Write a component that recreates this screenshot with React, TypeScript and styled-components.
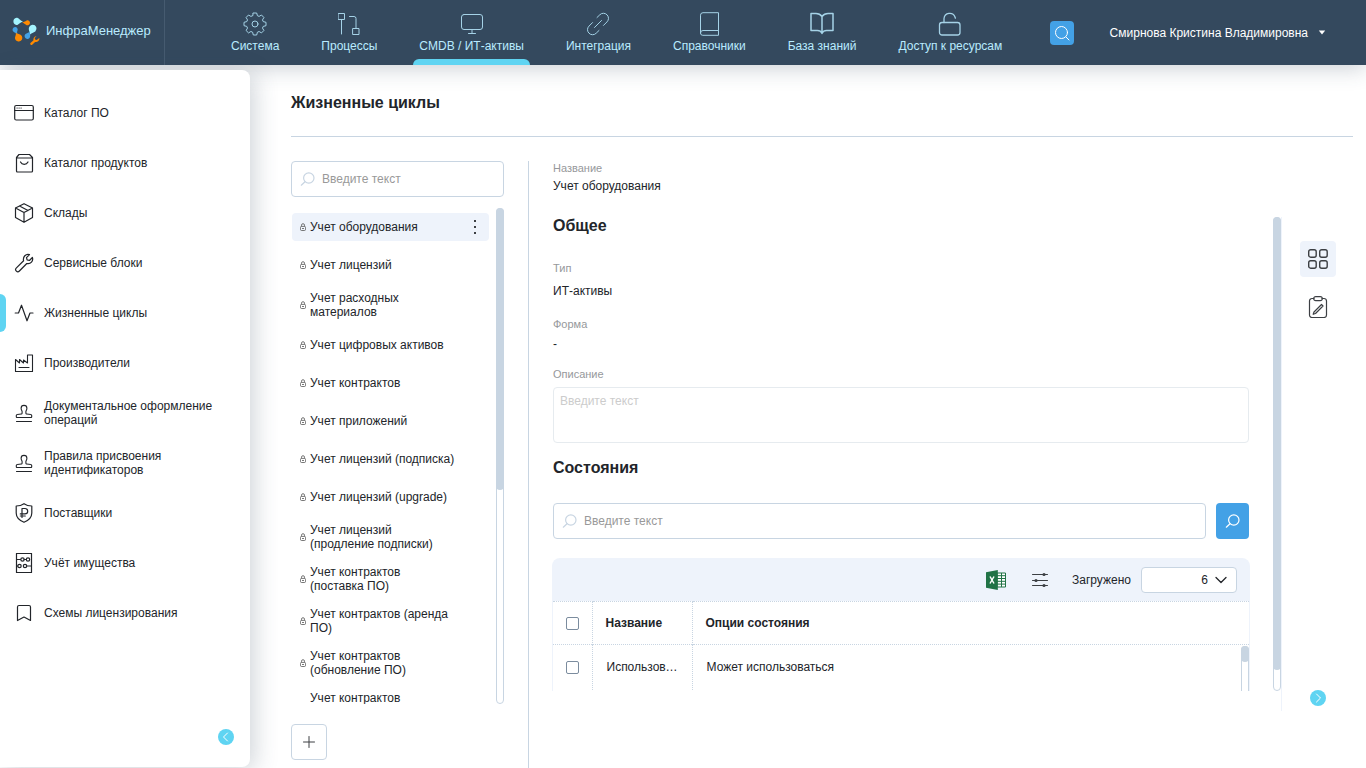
import React from "react";
import styled, { createGlobalStyle, css } from "styled-components";

const color = {
  header: "#34495e",
  headerText: "#b9ebff",
  accent: "#5fd4f2",
  blue: "#43a1e6",
  line: "#c8d5e2",
  soft: "#eef3fb",
  text: "#22252a",
  label: "#96989b",
};

const GlobalStyle = createGlobalStyle`
  *, *::before, *::after { box-sizing: border-box; }
  body {
    margin: 0;
    background: #fff;
    color: ${color.text};
    font: 12px/14px "Liberation Sans", Arial, sans-serif;
  }
  button, input, select, textarea { font: inherit; color: inherit; }
  button { cursor: pointer; }
  h1, h2, p, ul, dl, dd { margin: 0; padding: 0; }
  ul { list-style: none; }
  a { color: inherit; text-decoration: none; }
`;

const Page = styled.div`
  display: flex;
  flex-direction: column;
  height: 100vh;
  min-height: 640px;
  overflow: hidden;
`;

/* ---------- header ---------- */

const Header = styled.header`
  position: relative;
  z-index: 1;
  flex: none;
  display: flex;
  align-items: center;
  height: 65px;
  padding-right: 40px;
  background: ${color.header};
  box-shadow: 0 4px 20px rgba(52, 73, 94, 0.24);
`;

const Brand = styled.a`
  display: flex;
  align-items: center;
  gap: 6px;
  width: 165px;
  height: 100%;
  padding: 0 0 4px 12px;
  border-right: 1px solid #465b70;
  color: ${color.headerText};
  font-size: 13px;
`;

const Nav = styled.nav`
  flex: 1;
  display: flex;
  align-self: stretch;
  gap: 30px;
  padding-left: 60px;
`;

const NavItem = styled.a<{ $active?: boolean }>`
  display: flex;
  flex-direction: column;
  align-items: center;
  gap: 3px;
  padding: 12px 6px 0;
  color: ${color.headerText};
  white-space: nowrap;

  svg { opacity: 0.85; }

  &::after {
    content: "";
    align-self: stretch;
    height: 6px;
    margin: auto -6px 0;
    border-radius: 6px 6px 0 0;
    background: ${(p) => (p.$active ? color.accent : "transparent")};
  }
`;

const SearchButton = styled.button`
  display: grid;
  place-items: center;
  width: 24px;
  height: 24px;
  padding: 0;
  border: 0;
  border-radius: 4px;
  background: ${color.blue};
  color: #fff;
`;

const UserButton = styled.button`
  display: flex;
  align-items: center;
  gap: 10px;
  margin-left: 36px;
  padding: 0;
  border: 0;
  background: none;
  color: #fff;
  white-space: nowrap;
`;

/* ---------- side menu ---------- */

const Body = styled.div`
  flex: 1;
  min-height: 0;
  display: flex;
`;

const Sidebar = styled.aside`
  position: relative;
  z-index: 2;
  flex: none;
  display: flex;
  flex-direction: column;
  justify-content: space-between;
  width: 250px;
  margin: 5px 0 1px;
  padding: 18px 0 22px;
  border-radius: 0 8px 8px 0;
  background: #fff;
  box-shadow: 4px 4px 24px rgba(52, 73, 94, 0.24);
`;

const MenuLink = styled.a<{ $active?: boolean }>`
  display: flex;
  align-items: center;
  gap: 10px;
  height: 50px;
  padding-right: 30px;

  &::before {
    content: "";
    flex: none;
    width: 6px;
    height: 38px;
    margin-right: -2px;
    border-radius: 0 6px 6px 0;
    background: ${(p) => (p.$active ? color.accent : "transparent")};
  }
  svg { flex: none; }
`;

const RoundButton = styled.button`
  display: grid;
  place-items: center;
  width: 16px;
  height: 16px;
  padding: 0;
  border: 0;
  border-radius: 50%;
  background: ${color.accent};
  color: #fff;
`;

const SidebarFoot = styled.div`
  display: flex;
  justify-content: flex-end;
  padding-right: 16px;
`;

/* ---------- main area ---------- */

const Main = styled.main`
  flex: 1;
  min-width: 0;
  display: flex;
  flex-direction: column;
  padding: 28px 13px 0 41px;
`;

const PageTitle = styled.h1`
  padding-bottom: 23px;
  border-bottom: 1px solid ${color.line};
  font-size: 16px;
  line-height: 20px;
  font-weight: 700;
`;

const Columns = styled.div`
  flex: 1;
  min-height: 0;
  display: flex;
  padding-top: 24px;
`;

const ListColumn = styled.section`
  flex: none;
  display: flex;
  flex-direction: column;
  width: 213px;
  padding-bottom: 8px;
`;

const SearchField = styled.label`
  flex: 1 0 auto;
  display: flex;
  align-items: center;
  gap: 7px;
  height: 36px;
  padding: 0 8px;
  border: 1px solid ${color.line};
  border-radius: 4px;
  color: ${color.line};

  input {
    flex: 1;
    min-width: 0;
    padding: 0;
    border: 0;
    outline: 0;
    background: none;
    color: ${color.text};
  }
  input::placeholder { color: #999; opacity: 1; }
`;

const FieldRow = styled.div`
  flex: none;
  display: flex;
  gap: 10px;
`;

const ListArea = styled.div`
  flex: 1;
  min-height: 0;
  display: flex;
  justify-content: space-between;
  margin: 11px 0 20px;
`;

const List = styled.ul`
  width: 198px;
  padding-left: 1px;
  overflow: hidden;
`;

const ListItem = styled.li<{ $selected?: boolean; $top?: boolean }>`
  display: flex;
  align-items: ${(p) => (p.$top ? "flex-start" : "center")};
  gap: 4px;
  min-height: 28px;
  margin: 5px 0 10px;
  padding: 2px 8px;
  border-radius: 4px;
  background: ${(p) => (p.$selected ? color.soft : "transparent")};

  & + & { margin-top: 0; }
  > svg { flex: none; }
`;

const ItemText = styled.a`
  flex: 1;
  padding-right: 24px;
`;

const WideItemText = styled(ItemText)`
  padding-right: 0;
`;

const IconButton = styled.button<{ $on?: boolean }>`
  display: grid;
  place-items: center;
  width: 36px;
  height: 36px;
  padding: 0;
  border: 0;
  border-radius: 4px;
  background: ${(p) => (p.$on ? color.soft : "none")};
  color: #3c3f43;
`;

const DotsButton = styled(IconButton)`
  width: 12px;
  height: 20px;
`;

const AddButton = styled(IconButton)`
  flex: none;
  border: 1px solid ${color.line};
`;

const Track = styled.div<{ $open?: boolean }>`
  flex: none;
  width: 8px;
  border: 1px solid ${color.line};
  border-radius: 4px;
  ${(p) =>
    p.$open &&
    css`
      border-bottom: 0;
      border-radius: 4px 4px 0 0;
    `}
`;

const Thumb = styled.div`
  margin: -1px;
  border-radius: 4px;
  background: ${color.line};
`;

/* ---------- details ---------- */

const Details = styled.section`
  flex: 1;
  min-width: 0;
  display: flex;
  flex-direction: column;
  margin-left: 24px;
  padding-left: 24px;
  border-left: 1px solid ${color.line};
`;

const Label = styled.div`
  color: ${color.label};
  font-size: 11px;
  line-height: 14px;
`;

const Value = styled.div<{ $gap: number }>`
  margin-top: ${(p) => p.$gap}px;
`;

const DetailsBody = styled.div`
  flex: 1;
  min-height: 0;
  display: flex;
  margin-top: 24px;
`;

const ScrollPane = styled.div`
  flex: 1;
  min-width: 0;
  display: flex;
  padding-bottom: 20px;
  margin-bottom: 57px;
  border-right: 1px solid ${color.soft};
`;

const Form = styled.div`
  flex: 1;
  min-width: 0;
  display: flex;
  flex-direction: column;
  margin-right: 24px;
`;

const SectionTitle = styled.h2`
  font-size: 16px;
  line-height: 18px;
  font-weight: 700;
`;

const Group = styled.div<{ $gap: number }>`
  margin-top: ${(p) => p.$gap}px;
`;

const Description = styled.textarea`
  display: block;
  width: 100%;
  height: 56px;
  margin: 6px 0 16px;
  padding: 6px;
  border: 1px solid #e6ebef;
  border-radius: 4px;
  resize: none;
  &::placeholder { color: #ccc; opacity: 1; }
`;

const FindButton = styled(IconButton)`
  width: 33px;
  background: ${color.blue};
  color: #fff;
`;

const States = styled.div`
  flex: 1;
  min-height: 0;
  display: flex;
  flex-direction: column;
  margin: 19px -1px 0;
  overflow: hidden;
  border-radius: 8px 8px 0 0;
`;

const Toolbar = styled.div`
  flex: none;
  display: flex;
  align-items: center;
  justify-content: flex-end;
  gap: 8px;
  height: 43px;
  padding-right: 13px;
  background: ${color.soft};
`;

const CountLabel = styled.label`
  display: flex;
  align-items: center;
  gap: 10px;
  margin-left: 6px;
`;

const SelectBox = styled.span`
  display: grid;
  align-items: center;
  width: 96px;
  height: 26px;
  border: 1px solid ${color.line};
  border-radius: 4px;
  background: #fff;

  > * { grid-area: 1 / 1; }
  svg { justify-self: end; margin-right: 9px; pointer-events: none; }
`;

const Select = styled.select`
  width: 100%;
  height: 24px;
  padding: 0 28px 0 8px;
  border: 0;
  background: none;
  appearance: none;
  text-align: right;
  text-align-last: right;
`;

const TableArea = styled.div`
  position: relative;
  flex: 1;
  min-height: 0;
  overflow: hidden;
  border: solid ${color.soft};
  border-width: 0 1px;
`;

const Table = styled.table`
  width: 100%;
  table-layout: fixed;
  border-collapse: collapse;
  text-align: left;

  tr { height: 43px; }
  tbody tr { height: 45px; }
  th, td {
    padding: 0 12px;
    border-top: 1px dotted ${color.line};
    overflow: hidden;
    white-space: nowrap;
    text-overflow: ellipsis;
  }
  th + th { padding-left: 13px; }
  td + td { padding-left: 14px; }
  th + th, td + td { border-left: 1px dotted ${color.line}; }
  th { font-weight: 700; }
`;

const CheckCol = styled.col` width: 39px; `;
const NameCol = styled.col` width: 100px; `;

const Check = styled.input`
  display: block;
  appearance: none;
  width: 13px;
  height: 13px;
  margin: 1px 0 0 1px;
  border: 1px solid #7b8c9e;
  border-radius: 2px;
  background: #fff;
`;

const RowsScroll = styled.div`
  position: absolute;
  top: 45px;
  right: 0;
  bottom: 0;
  display: flex;
  background: #fff;
`;

const Rail = styled.div`
  flex: none;
  display: flex;
  flex-direction: column;
  align-items: center;
  gap: 12px;
  width: 36px;
  margin: 24px 17px 62px 18px;

  ${RoundButton} { margin-top: auto; }
`;

/* ---------- icons ---------- */

type IconProps = { size?: number; sw?: number; children: React.ReactNode };

const Icon = ({ size = 20, sw = 1, children }: IconProps) => (
  <svg
    width={size}
    height={size}
    viewBox={`0 0 ${size} ${size}`}
    fill="none"
    stroke="currentColor"
    strokeWidth={sw}
    strokeLinecap="round"
    strokeLinejoin="round"
    aria-hidden="true"
  >
    {children}
  </svg>
);

const Logo = () => (
  <svg width="28" height="28" viewBox="0 0 28 28" aria-hidden="true">
    <path fill="#a4f4ff" d="M4.500.7C7 .7 7.600 3.200 11 4.500 7.600 5.300 7 8 4.500 8a3.700 3.700 0 0 1 0-7.300z" />
    <path fill="#ff8a00" d="M15 3.300a2.500 2.500 0 1 1-.8 4.600C13 7 12.200 6 10 5.400c2.500 0 3.500-1.400 5-2.100z" />
    <path fill="#a4f4ff" d="M20.500 7.800a3.800 3.800 0 0 1 2.800 6.600C21.500 15.800 19.500 15.500 17.500 18c.6-2.600-.5-4-.7-5.800a3.900 3.900 0 0 1 3.700-4.400z" />
    <path fill="#43a1e6" d="M3 10a2.600 2.600 0 0 1 2.400 3.800C4.900 15 5 16 5.800 18 4.500 16.300 3.500 15.800 2.200 15.200A2.700 2.700 0 0 1 3 10z" />
    <path fill="#ff8a00" d="M3.800 15.500c1.400 1.600 3 1.300 4.800 2.200a3.700 3.700 0 1 1-5.500 4.300c-.6-2.400 1.400-3.700.7-6.500z" />
    <path fill="#43a1e6" d="M17.700 14.500c-.2 2.500.9 3 .4 5.200a2.800 2.800 0 1 1-4.600-2.700c1.300-1 2.700-.8 4.200-2.500z" />
    <path
      fill="#ff8a00"
      d="M24.500 19.200l-1.800 1.900.4 1.500 1.600.4 2.600-1.900c.5 2.400-1.800 4.400-4.200 3.800l-2.900 2.800c-1.200 1-2.700-.5-1.700-1.700l3-2.700c-.5-2.500 1-4.300 3-4.100z"
    />
  </svg>
);

const gearPath =
  "M10.300 1h3.400l.7 2.700 1.700.7 2.400-1.400 2.400 2.500-1.400 2.400.7 1.700 2.800.7v3.400l-2.800.7-.7 1.700 1.400 2.400-2.400 2.400-2.400-1.400-1.700.7-.7 2.800h-3.400l-.7-2.800-1.700-.7-2.400 1.400-2.400-2.400 1.400-2.400-.7-1.700L1 13.700v-3.400l2.800-.7.7-1.700-1.400-2.400L5.500 3l2.400 1.400 1.700-.7z";

const navIcons = {
  gear: (
    <Icon size={24}>
      <path d={gearPath} />
      <circle cx="12" cy="12" r="3" />
    </Icon>
  ),
  flow: (
    <Icon size={24}>
      <path d="M1.500 1.500h6v6h-6zM4.500 7.500V22M12.500 4.500h4.500a2 2 0 0 1 2 2v9.500M16 16.500h6v6h-6z" />
    </Icon>
  ),
  monitor: (
    <Icon size={24}>
      <rect x="1.500" y="2.500" width="21" height="15" rx="2.500" />
      <path d="M12 17.500v4M8.500 21.500h7" />
    </Icon>
  ),
  link: (
    <Icon size={24}>
      <path d="M11 5.500l2.800-2.700a5 5 0 0 1 7.200 0 5 5 0 0 1 0 7.100L17.500 13.400M13 18.500l-2.800 2.700a5 5 0 0 1-7.200 0 5 5 0 0 1 0-7.100L6.500 10.600M8.500 15.500l7-7" />
    </Icon>
  ),
  book: (
    <Icon size={24}>
      <path d="M21.500 18.500V.7H6A2.500 2.500 0 0 0 3.500 3.200V21A2.300 2.300 0 0 0 5.800 23.300H21.500V18.500H6A2.400 2.400 0 0 0 3.500 21" />
    </Icon>
  ),
  openBook: (
    <Icon size={24} sw={1.500}>
      <path d="M12 4.500C10.500 2.500 8.500 1.500 6 1.500H1v17h6.500c2 0 3.500.8 4.500 2.500 1-1.700 2.500-2.500 4.500-2.500H23v-17h-5c-2.500 0-4.500 1-6 3zM12 4.500V21.500" />
    </Icon>
  ),
  lock: (
    <Icon size={24} sw={1.300}>
      <rect x="1.500" y="10.500" width="20.500" height="12.500" rx="2.500" />
      <path d="M6 10.500V6.500a5.700 5.700 0 0 1 11-1.500l.4 1.200" />
    </Icon>
  ),
};

const stamp = (
  <Icon sw={1.100}>
    <path d="M3 14.500h14a.7.7 0 0 0 .7-.7V12.500a1 1 0 0 0-1-1l-4-.5a.8.8 0 0 1-.8-1V8.500c0-.8 1-1.500 1-3.200a2.900 2.900 0 0 0-5.800 0C7.100 7 8.100 7.700 8.100 8.500V10a.8.8 0 0 1-.8 1l-4 .5a1 1 0 0 0-1 1v1.300a.7.7 0 0 0 .7.7zM2.500 18.500h15" />
  </Icon>
);

const menu = [
  {
    text: "Каталог ПО",
    icon: (
      <Icon sw={1.200}>
        <rect x=".700" y="2.500" width="18.600" height="14.500" rx="1.500" />
        <path d="M.7 7.500h18.600M3 5h.2M5 5h.2M7 5h.2" />
      </Icon>
    ),
  },
  {
    text: "Каталог продуктов",
    icon: (
      <Icon sw={1.200}>
        <path d="M2.500 4.500L5 1.500h10.500L18.500 4.500V18a1 1 0 0 1-1 1h-14a1 1 0 0 1-1-1zM2.500 5h16M6.500 9a4.200 4.200 0 0 0 7.500 0" />
      </Icon>
    ),
  },
  {
    text: "Склады",
    icon: (
      <Icon sw={1.200}>
        <path d="M10 .7l8.500 4.300v9.500L10 19.300l-8.500-4.800V5zM1.500 5L10 9.500 18.500 5M10 9.500v9.800M5.500 3L14 7.500" />
      </Icon>
    ),
  },
  {
    text: "Сервисные блоки",
    icon: (
      <Icon sw={1.200}>
        <path d="M15.500 1.600l-3 3 .6 2.300 2.300.6 3-3c1.200 3.500-1.800 7-5.600 6l-7.400 7.500a1.900 1.900 0 0 1-3.200-2.900l7.400-7.300c-1-4 2.300-7.500 5.900-6.200z" />
      </Icon>
    ),
  },
  {
    text: "Жизненные циклы",
    active: true,
    icon: (
      <Icon sw={1.200}>
        <path d="M1.200 10h3.300L7.500 2.200l5.500 15.600L16 10h3" />
      </Icon>
    ),
  },
  {
    text: "Производители",
    icon: (
      <Icon sw={1.100}>
        <path d="M1.500 18.500v-12l4 3.500V6.500L9.500 10V7L13.500 10V2h5v16.500zM5 14.500h10" />
      </Icon>
    ),
  },
  { text: "Документальное оформление операций", icon: stamp },
  { text: "Правила присвоения идентификаторов", icon: stamp },
  {
    text: "Поставщики",
    icon: (
      <Icon sw={1.200}>
        <path d="M10 .7C7.500 2.500 5 3 2.200 3v7c0 4.500 3.500 7.500 7.800 9.300 4.300-1.800 7.800-4.800 7.800-9.300V3C15 3 12.500 2.500 10 .7zM8 14.500V5.500h3a2.700 2.700 0 0 1 0 5.400H6.300M6.300 13h5" />
      </Icon>
    ),
  },
  {
    text: "Учёт имущества",
    icon: (
      <Icon sw={1.200}>
        <path d="M2.500.5h15v19h-15zM2.500 6.500h4M2.500 13h1M13 13h4.500M10 6.500h2" />
        <circle cx="8.500" cy="6.500" r="1.700" />
        <circle cx="14" cy="6.500" r="1.700" />
        <circle cx="5.500" cy="13" r="1.700" />
        <circle cx="11" cy="13" r="1.700" />
      </Icon>
    ),
  },
  {
    text: "Схемы лицензирования",
    icon: (
      <Icon sw={1.200}>
        <path d="M3.500 17.500V4A1.500 1.500 0 0 1 5 2.500h10A1.500 1.500 0 0 1 16.500 4v13.500L10 14z" />
      </Icon>
    ),
  },
];

const nav = [
  { text: "Система", icon: navIcons.gear },
  { text: "Процессы", icon: navIcons.flow },
  { text: "CMDB / ИТ-активы", icon: navIcons.monitor, active: true },
  { text: "Интеграция", icon: navIcons.link },
  { text: "Справочники", icon: navIcons.book },
  { text: "База знаний", icon: navIcons.openBook },
  { text: "Доступ к ресурсам", icon: navIcons.lock },
];

const cycles = [
  "Учет лицензий",
  "Учет расходных материалов",
  "Учет цифровых активов",
  "Учет контрактов",
  "Учет приложений",
  "Учет лицензий (подписка)",
  "Учет лицензий (upgrade)",
  "Учет лицензий (продление подписки)",
  "Учет контрактов (поставка ПО)",
  "Учет контрактов (аренда ПО)",
  "Учет контрактов (обновление ПО)",
];

const SmallLock = () => (
  <svg width="6" height="8" viewBox="0 0 6 8" fill="none" stroke="#555" strokeWidth=".8" aria-hidden="true">
    <rect x=".4" y="3.400" width="5.200" height="4.100" rx="1.200" />
    <path d="M1.500 3.400V2.200a1.500 1.500 0 0 1 3 0v1.200M2 5.500h2" />
  </svg>
);

const SearchGlyph = () => (
  <Icon size={15} sw={1.200}>
    <circle cx="8.800" cy="6" r="5.200" />
    <path d="M5 9.700L1.300 13.200" />
  </Icon>
);

const Caret = () => (
  <svg width="8" height="5" viewBox="0 0 8 5" fill="currentColor" aria-hidden="true">
    <path d="M.8.500h6.400L4 4.500z" />
  </svg>
);

const Excel = () => (
  <svg width="20" height="20" viewBox="0 0 20 20" aria-hidden="true">
    <path d="M11 3h8.500v14H11z" fill="#fff" stroke="#217346" />
    <path d="M11 5.700h8M11 8.500h8M11 11.300h8M11 14.100h8M15.500 3v14" stroke="#217346" />
    <path d="M0 2.200L11.800 0v20L0 17.800z" fill="#217346" />
    <path d="M4 6.500l4 7M8 6.500l-4 7" stroke="#fff" strokeWidth="1.500" />
  </svg>
);

const Sliders = () => (
  <Icon size={16}>
    <path d="M.5 2.500h15M.5 8.500h15M.5 13.500h15" />
    <g fill="currentColor" stroke="none">
      <circle cx="12" cy="2.500" r="1.600" />
      <circle cx="4" cy="8.500" r="1.600" />
      <circle cx="12" cy="13.500" r="1.600" />
    </g>
  </Icon>
);

export default function App() {
  return (
    <Page>
      <GlobalStyle />
      <Header>
        <Brand href="#">
          <Logo />
          ИнфраМенеджер
        </Brand>
        <Nav>
          {nav.map((item) => (
            <NavItem key={item.text} href="#" $active={item.active}>
              {item.icon}
              {item.text}
            </NavItem>
          ))}
        </Nav>
        <SearchButton aria-label="Поиск">
          <Icon size={16}>
            <circle cx="7.500" cy="7.500" r="6" />
            <path d="M12 12l3 3" />
          </Icon>
        </SearchButton>
        <UserButton>
          Смирнова Кристина Владимировна
          <Caret />
        </UserButton>
      </Header>

      <Body>
        <Sidebar>
          <nav>
            {menu.map((item) => (
              <MenuLink key={item.text} href="#" $active={item.active}>
                {item.icon}
                {item.text}
              </MenuLink>
            ))}
          </nav>
          <SidebarFoot>
            <RoundButton aria-label="Свернуть меню">
              <Icon size={10} sw={1}>
                <path d="M6.500 1l-4 4 4 4" />
              </Icon>
            </RoundButton>
          </SidebarFoot>
        </Sidebar>

        <Main>
          <PageTitle>Жизненные циклы</PageTitle>
          <Columns>
            <ListColumn>
              <FieldRow>
                <SearchField>
                  <SearchGlyph />
                  <input type="text" placeholder="Введите текст" aria-label="Поиск по списку" />
                </SearchField>
              </FieldRow>
              <ListArea>
                <List>
                  <ListItem $selected>
                    <SmallLock />
                    <WideItemText href="#">Учет оборудования</WideItemText>
                    <DotsButton aria-label="Действия">
                      <svg width="2" height="14" viewBox="0 0 2 14" fill="currentColor" aria-hidden="true">
                        <path d="M0 0h2v2H0zM0 6h2v2H0zM0 12h2v2H0z" />
                      </svg>
                    </DotsButton>
                  </ListItem>
                  {cycles.map((name) => (
                    <ListItem key={name}>
                      <SmallLock />
                      <ItemText href="#">{name}</ItemText>
                    </ListItem>
                  ))}
                  <ListItem $top>
                    <svg width="6" height="8" aria-hidden="true" />
                    <ItemText href="#">Учет контрактов</ItemText>
                  </ListItem>
                </List>
                <Track>
                  <Thumb style={{ height: "57%" }} />
                </Track>
              </ListArea>
              <AddButton aria-label="Добавить">
                <Icon size={12}>
                  <path d="M6 .5v11M.5 6h11" />
                </Icon>
              </AddButton>
            </ListColumn>

            <Details>
              <Label>Название</Label>
              <Value $gap={4}>Учет оборудования</Value>
              <DetailsBody>
                <ScrollPane>
                  <Form>
                    <SectionTitle>Общее</SectionTitle>
                    <Group $gap={26}>
                      <Label>Тип</Label>
                      <Value $gap={9}>ИТ-активы</Value>
                    </Group>
                    <Group $gap={19}>
                      <Label>Форма</Label>
                      <Value $gap={6}>-</Value>
                    </Group>
                    <Group $gap={16}>
                      <Label as="label" htmlFor="description">Описание</Label>
                      <Description id="description" placeholder="Введите текст" />
                    </Group>
                    <SectionTitle>Состояния</SectionTitle>
                    <Group $gap={26}>
                      <FieldRow>
                        <SearchField>
                          <SearchGlyph />
                          <input type="text" placeholder="Введите текст" aria-label="Поиск состояний" />
                        </SearchField>
                        <FindButton aria-label="Найти">
                          <SearchGlyph />
                        </FindButton>
                      </FieldRow>
                    </Group>
                    <States>
                      <Toolbar>
                        <IconButton aria-label="Экспорт в Excel">
                          <Excel />
                        </IconButton>
                        <IconButton aria-label="Настройка столбцов">
                          <Sliders />
                        </IconButton>
                        <CountLabel>
                          Загружено
                          <SelectBox>
                            <Select defaultValue="6">
                              <option value="6">6</option>
                            </Select>
                            <Icon size={12} sw={1.300}>
                              <path d="M1 3.500L6 8.500 11 3.500" />
                            </Icon>
                          </SelectBox>
                        </CountLabel>
                      </Toolbar>
                      <TableArea>
                        <Table>
                          <colgroup>
                            <CheckCol />
                            <NameCol />
                            <col />
                          </colgroup>
                          <thead>
                            <tr>
                              <th><Check type="checkbox" aria-label="Выбрать все" /></th>
                              <th>Название</th>
                              <th>Опции состояния</th>
                            </tr>
                          </thead>
                          <tbody>
                            <tr>
                              <td><Check type="checkbox" aria-label="Выбрать строку" /></td>
                              <td>Использование</td>
                              <td>Может использоваться</td>
                            </tr>
                          </tbody>
                        </Table>
                        <RowsScroll>
                          <Track $open>
                            <Thumb style={{ height: 16 }} />
                          </Track>
                        </RowsScroll>
                      </TableArea>
                    </States>
                  </Form>
                  <Track>
                    <Thumb style={{ height: "96%" }} />
                  </Track>
                </ScrollPane>
                <Rail>
                  <IconButton $on aria-label="Основные данные">
                    <Icon size={20} sw={1.400}>
                      <rect x=".700" y=".700" width="7.500" height="7.500" rx="2" />
                      <rect x="11.700" y=".700" width="7.500" height="7.500" rx="2" />
                      <rect x=".700" y="11.700" width="7.500" height="7.500" rx="2" />
                      <rect x="11.700" y="11.700" width="7.500" height="7.500" rx="2" />
                    </Icon>
                  </IconButton>
                  <IconButton aria-label="Редактирование">
                    <Icon size={22} sw={1.200}>
                      <path d="M7 2.500H5a2.500 2.500 0 0 0-2.500 2.500v14a2.500 2.500 0 0 0 2.500 2.500h12a2.500 2.500 0 0 0 2.500-2.500v-14a2.500 2.500 0 0 0-2.500-2.500H15" />
                      <rect x="6.700" y=".700" width="8.600" height="4" rx="2" />
                      <path d="M14.500 8.500l1.500 1.500-7.500 7.500-2.300.8.800-2.300z" />
                    </Icon>
                  </IconButton>
                  <RoundButton aria-label="Развернуть панель">
                    <Icon size={10}>
                      <path d="M3.500 1l4 4-4 4" />
                    </Icon>
                  </RoundButton>
                </Rail>
              </DetailsBody>
            </Details>
          </Columns>
        </Main>
      </Body>
    </Page>
  );
}
